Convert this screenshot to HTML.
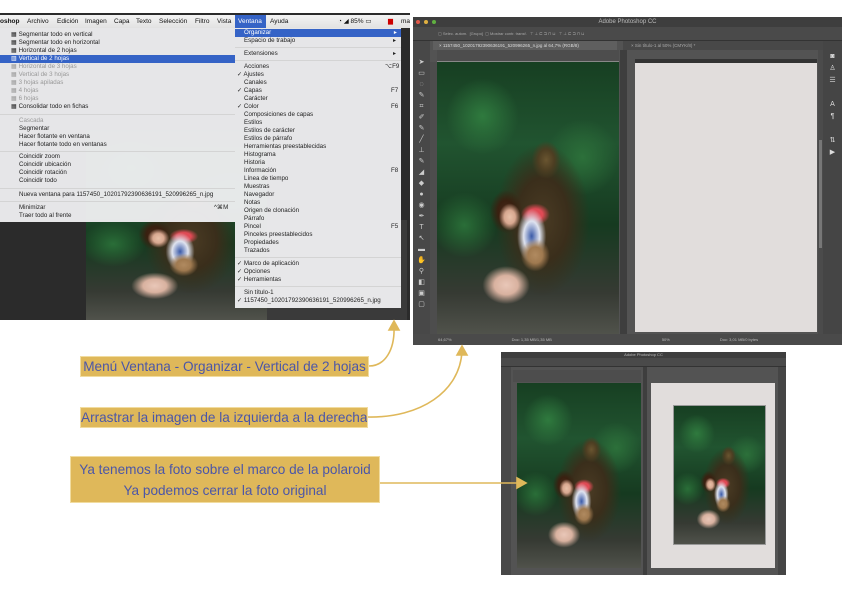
<!DOCTYPE html>
<html><head><meta charset="utf-8">
<style>
*{margin:0;padding:0;box-sizing:border-box}
body{width:842px;height:596px;background:#fff;position:relative;overflow:hidden;font-family:"Liberation Sans",sans-serif}
.a{position:absolute}
.photo{position:absolute;overflow:hidden;
background:
radial-gradient(ellipse 6% 5% at 40% 57%,#e8c0a8 0,#d8a890 50%,transparent 100%),
radial-gradient(ellipse 9% 8% at 38% 55%,#4a2a1a 0,#3a2010 50%,transparent 100%),
radial-gradient(ellipse 8% 6% at 54% 71%,#b08a60 0,#a07a50 50%,transparent 100%),
radial-gradient(ellipse 8% 10% at 52% 64%,#3a5aa8 0,#dfe3ef 55%,transparent 100%),
radial-gradient(ellipse 8% 4% at 54% 56%,#e04a55 0,#e04a55 50%,transparent 100%),
radial-gradient(ellipse 13% 7% at 38% 82%,#e9c7b8 0,#d9b2a0 50%,transparent 100%),
radial-gradient(ellipse 8% 7% at 60% 36%,#6a5530 0,#4d3e22 55%,transparent 100%),
radial-gradient(ellipse 26% 28% at 58% 58%,#4a3b24 0,#3a2e1b 55%,transparent 100%),
radial-gradient(ellipse 20% 14% at 25% 20%,#2f7a3e 0,transparent 100%),
radial-gradient(ellipse 20% 14% at 80% 35%,#2c703a 0,transparent 100%),
radial-gradient(ellipse 18% 12% at 15% 60%,#2a6e38 0,transparent 100%),
linear-gradient(180deg,#173f22 0,#215430 30%,#163a20 60%,#363a33 85%,#50524b 100%);}
.menu{position:absolute;background:rgba(238,238,240,.96);font-size:6.2px;color:#222;line-height:8px}
.menu div{position:absolute;white-space:nowrap}
.dis{color:#999}
.sep{height:1px;background:#d4d4d4;left:0;right:0}
.lab{position:absolute;background:#dfb85a;color:#4b56a8;font-size:13.6px;text-align:center;white-space:nowrap;border:1px solid #f1dc9f;overflow:hidden}
</style></head><body>

<!-- Screenshot 1 -->
<div class="a" style="left:0;top:13px;width:410px;height:307px;background:#2b2b2b"></div>
<div class="a" style="left:267px;top:220px;width:140px;height:100px;background:#3a3a3a"></div>
<div class="photo" style="left:86px;top:130px;width:181px;height:190px"></div>
<div class="a" style="left:0;top:15px;width:410px;height:13px;background:linear-gradient(#f3f3f3,#e2e2e2);font-size:6.5px;line-height:13px;color:#111;white-space:nowrap">
<span style="position:absolute;left:0;font-weight:bold">oshop</span>
<span style="position:absolute;left:27px">Archivo</span>
<span style="position:absolute;left:57px">Edición</span>
<span style="position:absolute;left:85px">Imagen</span>
<span style="position:absolute;left:114px">Capa</span>
<span style="position:absolute;left:136px">Texto</span>
<span style="position:absolute;left:159px">Selección</span>
<span style="position:absolute;left:195px">Filtro</span>
<span style="position:absolute;left:217px">Vista</span>
<span style="position:absolute;left:235px;width:31px;background:#3563c6;color:#fff;padding-left:3px">Ventana</span>
<span style="position:absolute;left:270px">Ayuda</span>
<span style="position:absolute;left:338px">◔ ◢ 85% ▭</span>
<span style="position:absolute;left:388px;color:#c00">▆</span>
<span style="position:absolute;left:401px">ma</span>
</div>

<div class="menu" style="left:0;top:28px;width:235px;height:194px">
<div style="left:11px;top:3px">▦ Segmentar todo en vertical</div>
<div style="left:11px;top:11px">▦ Segmentar todo en horizontal</div>
<div style="left:11px;top:19px">▦ Horizontal de 2 hojas</div>
<div style="left:0;top:27px;width:235px;height:8px;background:#3563c6;color:#fff;padding-left:11px">▥ Vertical de 2 hojas</div>
<div class="dis" style="left:11px;top:35px">▦ Horizontal de 3 hojas</div>
<div class="dis" style="left:11px;top:43px">▦ Vertical de 3 hojas</div>
<div class="dis" style="left:11px;top:51px">▦ 3 hojas apiladas</div>
<div class="dis" style="left:11px;top:59px">▦ 4 hojas</div>
<div class="dis" style="left:11px;top:67px">▦ 6 hojas</div>
<div style="left:11px;top:75px">▦ Consolidar todo en fichas</div>
<div class="sep" style="top:86px"></div>
<div class="dis" style="left:19px;top:89px">Cascada</div>
<div style="left:19px;top:97px">Segmentar</div>
<div style="left:19px;top:105px">Hacer flotante en ventana</div>
<div style="left:19px;top:113px">Hacer flotante todo en ventanas</div>
<div class="sep" style="top:123px"></div>
<div style="left:19px;top:125px">Coincidir zoom</div>
<div style="left:19px;top:133px">Coincidir ubicación</div>
<div style="left:19px;top:141px">Coincidir rotación</div>
<div style="left:19px;top:149px">Coincidir todo</div>
<div class="sep" style="top:160px"></div>
<div style="left:19px;top:163px">Nueva ventana para 1157450_10201792390636191_520996265_n.jpg</div>
<div class="sep" style="top:173px"></div>
<div style="left:19px;top:176px">Minimizar</div><div style="left:214px;top:176px">^⌘M</div>
<div style="left:19px;top:184px">Traer todo al frente</div>
</div>

<div class="menu" style="left:235px;top:28px;width:166px;height:280px">
<div style="left:0;top:1px;width:166px;height:8px;background:#3563c6;color:#fff;padding-left:9px">Organizar<span style="position:absolute;right:4px">▸</span></div>
<div style="left:9px;top:9px">Espacio de trabajo</div><div style="left:158px;top:9px">▸</div>
<div class="sep" style="top:19px"></div>
<div style="left:9px;top:22px">Extensiones</div><div style="left:158px;top:22px">▸</div>
<div class="sep" style="top:32px"></div>
<div style="left:9px;top:35px">Acciones</div><div style="left:150px;top:35px">⌥F9</div>
<div style="left:2px;top:43px">✓ Ajustes</div>
<div style="left:9px;top:51px">Canales</div>
<div style="left:2px;top:59px">✓ Capas</div><div style="left:156px;top:59px">F7</div>
<div style="left:9px;top:67px">Carácter</div>
<div style="left:2px;top:75px">✓ Color</div><div style="left:156px;top:75px">F6</div>
<div style="left:9px;top:83px">Composiciones de capas</div>
<div style="left:9px;top:91px">Estilos</div>
<div style="left:9px;top:99px">Estilos de carácter</div>
<div style="left:9px;top:107px">Estilos de párrafo</div>
<div style="left:9px;top:115px">Herramientas preestablecidas</div>
<div style="left:9px;top:123px">Histograma</div>
<div style="left:9px;top:131px">Historia</div>
<div style="left:9px;top:139px">Información</div><div style="left:156px;top:139px">F8</div>
<div style="left:9px;top:147px">Línea de tiempo</div>
<div style="left:9px;top:155px">Muestras</div>
<div style="left:9px;top:163px">Navegador</div>
<div style="left:9px;top:171px">Notas</div>
<div style="left:9px;top:179px">Origen de clonación</div>
<div style="left:9px;top:187px">Párrafo</div>
<div style="left:9px;top:195px">Pincel</div><div style="left:156px;top:195px">F5</div>
<div style="left:9px;top:203px">Pinceles preestablecidos</div>
<div style="left:9px;top:211px">Propiedades</div>
<div style="left:9px;top:219px">Trazados</div>
<div class="sep" style="top:229px"></div>
<div style="left:2px;top:232px">✓ Marco de aplicación</div>
<div style="left:2px;top:240px">✓ Opciones</div>
<div style="left:2px;top:248px">✓ Herramientas</div>
<div class="sep" style="top:258px"></div>
<div style="left:9px;top:261px">Sin título-1</div>
<div style="left:2px;top:269px">✓ 1157450_10201792390636191_520996265_n.jpg</div>
</div>

<!-- Screenshot 2 -->
<div class="a" style="left:413px;top:17px;width:429px;height:328px;background:#535353"></div>
<div class="a" style="left:413px;top:17px;width:429px;height:10px;background:#3e3e3e;color:#bbb;font-size:6px;line-height:10px;text-align:center">Adobe Photoshop CC</div>
<div class="a" style="left:416px;top:20px;width:4px;height:4px;border-radius:50%;background:#e05848;box-shadow:8px 0 0 #e0b040,16px 0 0 #60b040"></div>
<div class="a" style="left:413px;top:27px;width:429px;height:14px;background:#4a4a4a;border-bottom:1px solid #333;color:#aaa;font-size:4px;line-height:14px;padding-left:25px">▢ Selec. autom. &nbsp;[Grupo] &nbsp;▢ Mostrar contr. transf. &nbsp; ⊤ ⊥ ⊏ ⊐ ⊓ ⊔ &nbsp; ⊤ ⊥ ⊏ ⊐ ⊓ ⊔</div>
<div class="a" style="left:413px;top:41px;width:17px;height:304px;background:#484848"></div>
<div class="a" style="left:413px;top:57px;width:17px;height:270px;color:#ccc;font-size:7px;line-height:11px;text-align:center">➤<br>▭<br>◌<br>✎<br>⌗<br>✐<br>✎<br>╱<br>⊥<br>✎<br>◢<br>◆<br>●<br>◉<br>✒<br>T<br>↖<br>▬<br>✋<br>⚲<br>◧<br>▣<br>▢</div>
<div class="a" style="left:433px;top:41px;width:184px;height:9px;background:#5f5f5f;color:#ddd;font-size:4.5px;line-height:9px;padding-left:6px;white-space:nowrap">× 1157450_10201792390636191_520996265_n.jpg al 64,7% (RGB/8)</div>
<div class="a" style="left:623px;top:41px;width:200px;height:9px;background:#484848;color:#aaa;font-size:4.5px;line-height:9px;padding-left:8px">× Sin título-1 al 50% (CMYK/8) *</div>
<div class="a" style="left:437px;top:50px;width:182px;height:12px;background:#4d4d4d;border-bottom:1px solid #888"></div>
<div class="a" style="left:430px;top:62px;width:7px;height:272px;background:#4d4d4d"></div>
<div class="photo" style="left:437px;top:62px;width:182px;height:272px"></div>
<div class="a" style="left:620px;top:50px;width:7px;height:295px;background:#3e3e3e"></div>
<div class="a" style="left:635px;top:59px;width:182px;height:4px;background:#333"></div>
<div class="a" style="left:635px;top:63px;width:182px;height:269px;background:#e1dddc"></div>
<div class="a" style="left:818px;top:50px;width:5px;height:295px;background:#4b4b4b"></div>
<div class="a" style="left:819px;top:140px;width:3px;height:108px;background:#777"></div>
<div class="a" style="left:823px;top:41px;width:19px;height:304px;background:#454545;color:#ddd;font-size:7px;line-height:12px;text-align:center;padding-top:10px">◙<br>♙<br>☰<br><br>A<br>¶<br><br>⇅<br>▶</div>
<div class="a" style="left:413px;top:334px;width:429px;height:11px;background:#4a4a4a;color:#bbb;font-size:4px;line-height:11px;white-space:nowrap"><span style="margin-left:25px">64,67%</span><span style="margin-left:60px">Doc: 1,35 MB/1,35 MB</span><span style="margin-left:110px">50%</span><span style="margin-left:50px">Doc: 3,01 MB/0 bytes</span></div>

<!-- Screenshot 3 -->
<div class="a" style="left:501px;top:352px;width:285px;height:223px;background:#535353"></div>
<div class="a" style="left:501px;top:352px;width:285px;height:6px;background:#3e3e3e;color:#bbb;font-size:4px;line-height:6px;text-align:center">Adobe Photoshop CC</div>
<div class="a" style="left:501px;top:358px;width:285px;height:9px;background:#4a4a4a;border-bottom:1px solid #333"></div>
<div class="a" style="left:501px;top:367px;width:10px;height:208px;background:#484848"></div>
<div class="a" style="left:513px;top:370px;width:128px;height:12px;background:#4d4d4d"></div>
<div class="photo" style="left:517px;top:383px;width:124px;height:185px"></div>
<div class="a" style="left:643px;top:367px;width:4px;height:208px;background:#3e3e3e"></div>
<div class="a" style="left:651px;top:383px;width:124px;height:185px;background:#e1dddc"></div>
<div class="photo" style="left:673px;top:405px;width:93px;height:140px;border:1px solid #999"></div>
<div class="a" style="left:778px;top:367px;width:8px;height:208px;background:#454545"></div>

<!-- Labels -->
<div class="lab" style="left:80px;top:356px;width:289px;height:21px;line-height:19px">Menú Ventana - Organizar - Vertical de 2 hojas</div>
<div class="lab" style="left:80px;top:407px;width:288px;height:21px;line-height:19px">Arrastrar la imagen de la izquierda a la derecha</div>
<div class="lab" style="left:70px;top:456px;width:310px;height:47px;line-height:21px;padding-top:2px">Ya tenemos la foto sobre el marco de la polaroid<br>Ya podemos cerrar la foto original</div>

<svg class="a" style="left:0;top:0" width="842" height="596" viewBox="0 0 842 596" fill="none" stroke="#dfb85a" stroke-width="1.6">
<path d="M369 366 C385 366 395 350 394 326"/>
<path d="M389 330 L394 321 L399 330 Z" fill="#dfb85a"/>
<path d="M368 417 C420 418 460 392 462 351"/>
<path d="M457 355 L462 346 L467 355 Z" fill="#dfb85a"/>
<path d="M380 483 L520 483"/>
<path d="M517 478 L526 483 L517 488 Z" fill="#dfb85a"/>
</svg>
</body></html>
